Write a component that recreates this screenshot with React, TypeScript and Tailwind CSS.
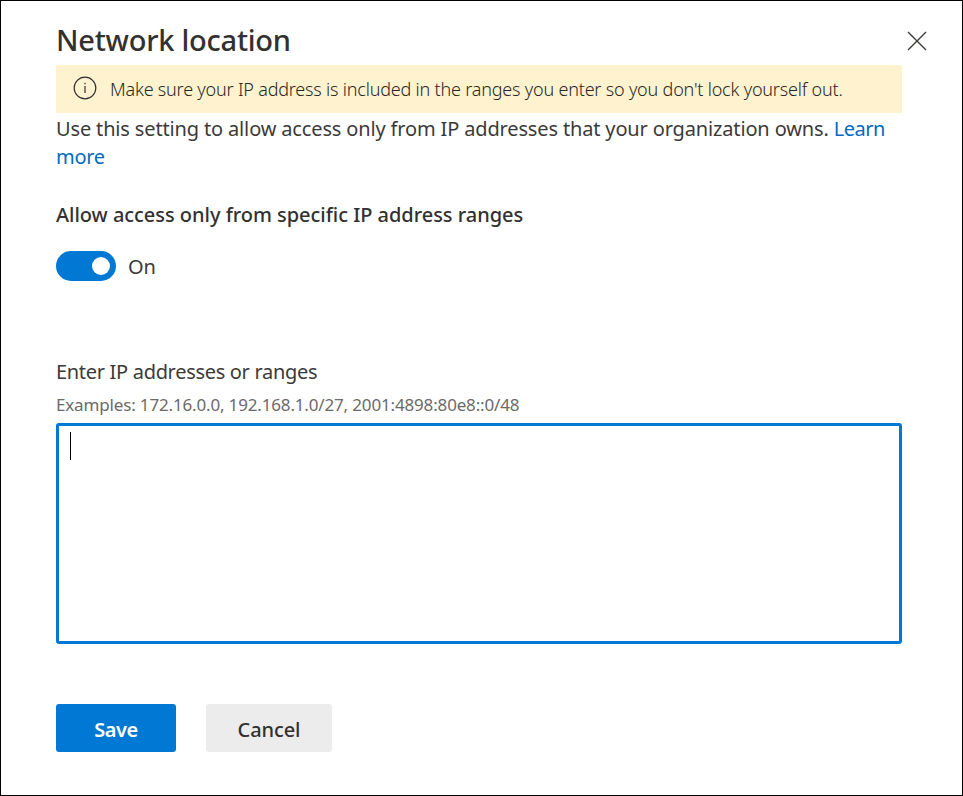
import { useState } from "react";

export default function App() {
  const [on, setOn] = useState(true);
  return (
    <main className="h-[796px] w-[963px] overflow-hidden whitespace-nowrap border border-black bg-white pl-[55px] pr-[30px] text-[20px] text-[#3b3a39] [font-family:'Noto_Sans','Open_Sans',sans-serif]">
      <header className="flex h-16 items-start justify-between pt-[20px]">
        <h1 className="text-[29px] font-medium leading-[38px] tracking-[-0.24px] text-[#323130]">Network location</h1>
        <button aria-label="Close" className="mt-[10px] mr-[5px]">
          <svg width="20" height="20" viewBox="0 0 20 20" stroke="#3b3a39" strokeWidth="1.35">
            <path d="M1 1L19 19M19 1L1 19" />
          </svg>
        </button>
      </header>
      <div className="flex h-12 w-[846px] items-center bg-[#fff2ce] pl-[17px]">
        <svg className="mb-0.5" width="24" height="24" viewBox="0 0 24 24" fill="none" stroke="#323130" strokeWidth="1.2">
          <circle cx="12" cy="12" r="10.8" />
          <path d="M12 10v7M12 6.8v1.5" />
        </svg>
        <span className="ml-[13px] text-[18px] font-light tracking-[-0.2px] text-[#292827]">Make sure your IP address is included in the ranges you enter so you don't lock yourself out.</span>
      </div>
      <p className="h-[84px] w-[846px] pt-0.5 leading-7 tracking-[-0.15px]">
        Use this setting to allow access only from IP addresses that your organization owns.{" "}
        <a className="tracking-[-0.5px] text-[#006cbe]">Learn</a>
        <br />
        <a className="tracking-[-0.3px] text-[#006cbe]">more</a>
      </p>
      <h2 className="flex h-9 items-center font-medium tracking-[-0.03px] text-[#323130]">Allow access only from specific IP address ranges</h2>
      <div className="mt-[18px] flex h-[30px] items-center gap-3">
        <button role="switch" aria-checked={on} onClick={() => setOn(!on)} className="flex h-[30px] w-[60px] items-center justify-end rounded-full bg-[#0078d4] pr-1.5">
          <span className="size-[18px] rounded-full bg-white" />
        </button>
        <span className="pt-0.5">On</span>
      </div>
      <label className="mt-[77px] flex h-7 items-center tracking-[-0.31px]">Enter IP addresses or ranges</label>
      <div className="mt-[7px] flex h-6 items-center text-[17px] tracking-[-0.16px] text-[#6c6a68]">Examples: 172.16.0.0, 192.168.1.0/27, 2001:4898:80e8::0/48</div>
      <div className="mt-1.5 h-[221px] w-[846px] rounded-[3px] border-[3px] border-[#0078d4] pl-[11px] pt-[6px]">
        <div className="h-7 w-px bg-black" />
      </div>
      <footer className="mt-[60px] flex gap-[30px]">
        <button className="flex h-12 w-[120px] items-center justify-center rounded-[3px] bg-[#0078d4] pt-1 font-semibold tracking-[-0.4px] text-white">Save</button>
        <button className="flex h-12 w-[126px] items-center justify-center rounded-[3px] bg-[#ececec] pt-1 font-medium tracking-[-0.1px] text-[#323130]">Cancel</button>
      </footer>
    </main>
  );
}
